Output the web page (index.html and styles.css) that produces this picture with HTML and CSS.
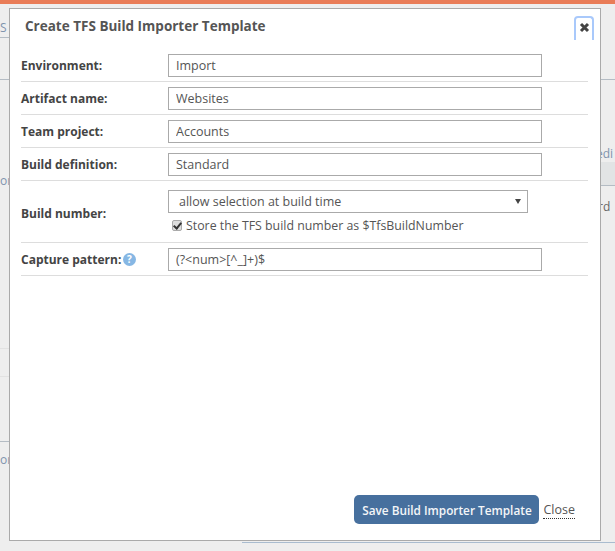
FILE: index.html
```html
<!DOCTYPE html>
<html>

	<head>
		<meta charset="UTF-8">
		<title>Create TFS Build Importer Template</title>
		<link rel="stylesheet" href="styles.css">
	</head>

	<body>
		<div class="topbar"></div>

		<div class="behind">
			<span class="bg-text bg-s">S</span>
			<span class="bg-line bg-line1"></span>
			<span class="bg-line bg-line2"></span>
			<span class="bg-text bg-or1">or</span>
			<span class="bg-text bg-edi">edi</span>
			<span class="bg-head"></span>
			<span class="bg-text bg-rd">rd</span>
			<span class="bg-line bg-line3"></span>
			<span class="bg-line bg-line4"></span>
			<span class="bg-line bg-line5"></span>
			<span class="bg-text bg-or2">or</span>
			<span class="bg-line bg-line6"></span>
			<span class="bg-line bg-line7"></span>
		</div>

		<div class="modal">
			<div class="modal-head">
				<h2>Create TFS Build Importer Template</h2>
				<button class="close-x">
					<svg width="11" height="11" viewBox="0 0 11 11">
						<path d="M2 2l7 7M9 2l-7 7" stroke="#444" stroke-width="3" fill="none" />
					</svg>
				</button>
			</div>

			<div class="row">
				<label>Environment:</label>
				<input class="field" type="text" value="Import" />
			</div>
			<div class="row">
				<label>Artifact name:</label>
				<input class="field" type="text" value="Websites" />
			</div>
			<div class="row">
				<label>Team project:</label>
				<input class="field" type="text" value="Accounts" />
			</div>
			<div class="row">
				<label>Build definition:</label>
				<input class="field" type="text" value="Standard" />
			</div>
			<div class="row row-tall">
				<label>Build number:</label>
				<div class="stack">
					<div class="select">
						<span>allow selection at build time</span>
						<i class="arrow"></i>
					</div>
					<div class="check">
						<input type="checkbox" checked />
						<span>Store the TFS build number as $TfsBuildNumber</span>
					</div>
				</div>
			</div>
			<div class="row">
				<label>Capture pattern:
					<svg class="help" width="13" height="13" viewBox="0 0 13 13">
						<circle cx="6.5" cy="6.5" r="6.5" fill="#86b7e4" />
						<text x="6.5" y="10" text-anchor="middle" class="help-mark">?</text>
					</svg>
				</label>
				<input class="field" type="text" value="(?&lt;num&gt;[^_]+)$" />
			</div>

			<div class="foot">
				<button class="save">Save Build Importer Template</button>
				<a class="close-link">Close</a>
			</div>
		</div>
	</body>

</html>
```

FILE: styles.css
```css
* {
	margin: 0;
	padding: 0;
	box-sizing: border-box;
}

body {
	width: 615px;
	height: 551px;
	background: #eeeeee;
	font: 13px "Open Sans", sans-serif;
	color: #444;
	overflow: hidden;
	position: relative;
}

.topbar {
	height: 4px;
	background: #e97c57;
}

.bg-text {
	position: absolute;
	font-size: 12px;
	line-height: 18px;
	color: #7f93ad;
}

.bg-s { left: 0; top: 19px; }
.bg-or1 { left: 0; top: 172px; }
.bg-edi { left: 596px; top: 145px; }
.bg-rd { left: 598px; top: 198px; color: #666; }
.bg-or2 { left: 0; top: 451px; }

.bg-line {
	position: absolute;
	height: 1px;
	background: #b4bcc4;
}

.bg-line1 { left: 0; width: 9px; top: 37px; }
.bg-line2 { left: 0; width: 9px; top: 79px; }
.bg-line3 { left: 0; width: 9px; top: 348px; background: #e2e2e2; }
.bg-line4 { left: 0; width: 9px; top: 376px; background: #e2e2e2; }
.bg-line5 { left: 0; width: 9px; top: 441px; }
.bg-line6 { left: 242px; width: 373px; top: 542px; background: #a9bccf; }
.bg-line7 { left: 601px; width: 14px; top: 79px; }

.bg-head {
	position: absolute;
	left: 601px;
	width: 14px;
	top: 162px;
	height: 24px;
	background: #e2e4e5;
	border-bottom: 1px solid #b4bcc4;
}

.modal {
	position: absolute;
	left: 9px;
	top: 8px;
	width: 592px;
	height: 533px;
	background: #fff;
	border: 1px solid #aaa;
	padding: 0 12px 0 11px;
	display: flex;
	flex-direction: column;
}

.modal-head {
	height: 40px;
	padding-left: 4px;
	display: flex;
	justify-content: space-between;
	align-items: flex-start;
	position: relative;
}

.modal-head h2 {
	font-size: 13.5px;
	font-weight: 700;
	color: #555;
	line-height: 18px;
	margin-top: 8px;
}

.close-x {
	position: absolute;
	right: -6px;
	top: 7px;
	width: 20px;
	height: 24px;
	background: none;
	border: 2px solid #a9c9fb;
	border-bottom: 0;
	border-radius: 4px 4px 0 0;
	padding-top: 4px;
	display: flex;
	justify-content: center;
	align-items: flex-start;
}

.row {
	height: 33px;
	display: flex;
	align-items: center;
	border-bottom: 1px solid #ddd;
	flex: none;
}

.row-tall {
	height: 62px;
	padding-top: 2px;
}

.row label {
	width: 147px;
	flex: none;
	font-weight: 700;
	font-size: 12px;
	color: #444;
	display: flex;
	align-items: center;
	gap: 2px;
	padding-top: 1px;
}

.field {
	width: 374px;
	height: 23px;
	border: 1px solid #aaa;
	padding: 1px 7px 0;
	font: 12.5px "Open Sans", sans-serif;
	color: #555;
	background: #fff;
}

.help-mark {
	font: 700 10px "Open Sans", sans-serif;
	fill: #fff;
}

.stack {
	display: flex;
	flex-direction: column;
	gap: 4px;
}

.select {
	width: 360px;
	height: 23px;
	border: 1px solid #aaa;
	padding: 0 6px 0 10px;
	font-size: 12.5px;
	color: #555;
	display: flex;
	align-items: center;
	justify-content: space-between;
}

.arrow {
	width: 0;
	height: 0;
	border-left: 3px solid transparent;
	border-right: 3px solid transparent;
	border-top: 5px solid #444;
}

.check {
	display: flex;
	align-items: center;
	gap: 4px;
	padding-left: 4px;
	margin-bottom: 1px;
	font-size: 12.35px;
	color: #555;
}

.check input {
	appearance: none;
	width: 10px;
	height: 11px;
	background: #ddd;
	border: 1px solid #aaa;
	border-radius: 2px;
	position: relative;
}

.check input::before {
	content: "";
	position: absolute;
	left: 2px;
	top: 0;
	width: 3px;
	height: 6px;
	border: solid #333;
	border-width: 0 2px 2px 0;
	transform: rotate(40deg);
}

.foot {
	margin-top: auto;
	padding-bottom: 16px;
	padding-right: 13px;
	display: flex;
	align-items: center;
	justify-content: flex-end;
	gap: 4px;
}

.save {
	width: 185px;
	height: 29px;
	background: #47709e;
	color: #f4f6f8;
	border: 0;
	border-radius: 5px;
	font: 600 11.8px "Open Sans", sans-serif;
}

.close-link {
	font-size: 12.5px;
	color: #555;
	border-bottom: 1px dotted #333;
}
```
